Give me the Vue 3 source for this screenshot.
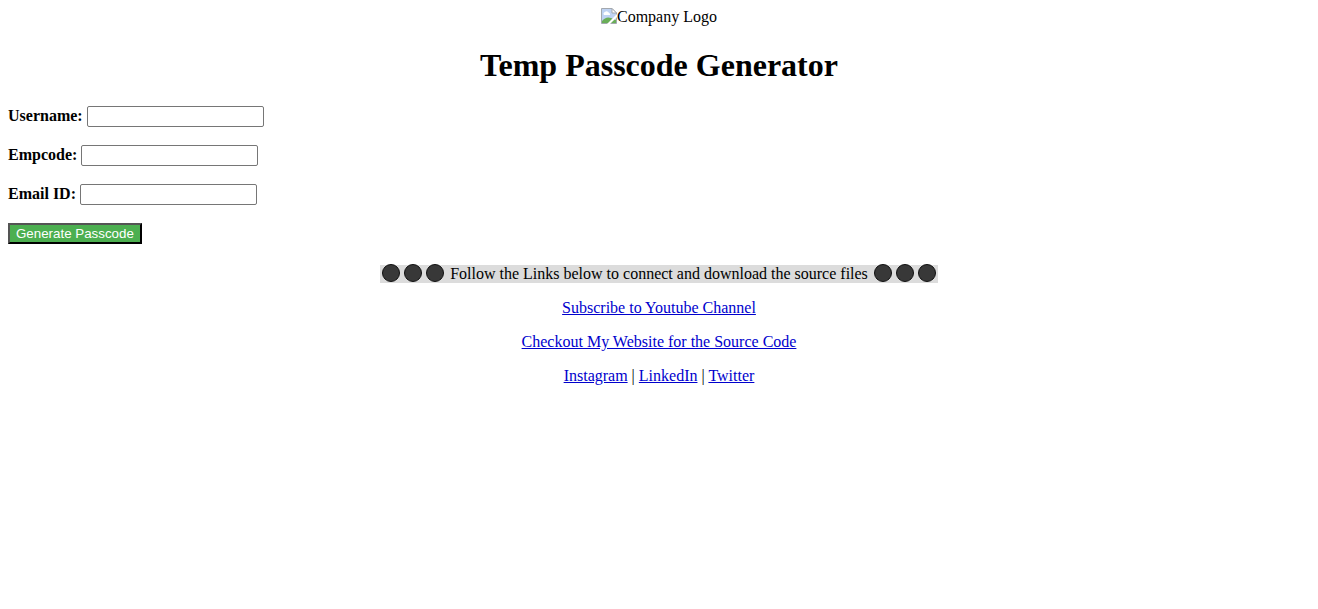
<script setup>
import { reactive } from 'vue'

const fields = [
  { id: 'username', label: 'Username:', type: 'text' },
  { id: 'empcode', label: 'Empcode:', type: 'text' },
  { id: 'email', label: 'Email ID:', type: 'email' },
]
const form = reactive({ username: '', empcode: '', email: '' })
</script>

<template>
  <main class="page">
    <header class="header">
      <div class="logo">
        <svg class="logo-icon" width="16" height="16" viewBox="0 0 16 16" aria-hidden="true">
          <path d="M0.5 0.5H11L15.5 5V15.5H0.5Z" fill="#bfd3f3" stroke="#a3a8ae" />
          <path d="M3 7a2 2 0 0 1 1-3a2.5 2.5 0 0 1 4 1a1.5 1.5 0 0 1 1 2Z" fill="#fff" />
          <path d="M1 15V13Q5 8 10 10L15 12V15Z" fill="#6aae58" />
          <path d="M11 0.5V5H15.5Z" fill="#fff" stroke="#a3a8ae" />
          <path d="M16 6L6 16H9L16 9Z" fill="#fff" />
        </svg>
        <span>Company Logo</span>
      </div>
      <h1 class="title">Temp Passcode Generator</h1>
    </header>

    <form class="form" @submit.prevent>
      <div v-for="f in fields" :key="f.id" class="field">
        <label :for="f.id">{{ f.label }}</label>
        <input :id="f.id" v-model="form[f.id]" :type="f.type" />
      </div>
      <button class="submit" type="submit">Generate Passcode</button>
    </form>

    <footer class="footer">
      <p class="banner">
        <svg v-for="n in 3" :key="n" class="dot" width="22" height="20" viewBox="0 0 22 20" aria-hidden="true">
          <circle cx="11" cy="10" r="8.5" fill="#383838" stroke="#101010" />
        </svg>
        <span class="banner-text">Follow the Links below to connect and download the source files</span>
        <svg v-for="n in 3" :key="n + 3" class="dot" width="22" height="20" viewBox="0 0 22 20" aria-hidden="true">
          <circle cx="11" cy="10" r="8.5" fill="#383838" stroke="#101010" />
        </svg>
      </p>
      <p><a href="#youtube">Subscribe to Youtube Channel</a></p>
      <p><a href="#website">Checkout My Website for the Source Code</a></p>
      <p>
        <a href="#instagram">Instagram</a> | <a href="#linkedin">LinkedIn</a> | <a href="#twitter">Twitter</a>
      </p>
    </footer>
  </main>
</template>

<style scoped>
.page {
  padding: 8px;
  color: #000;
  font: 16px/18px "Liberation Serif", "Times New Roman", serif;
}
.header {
  text-align: center;
}
.logo {
  display: flex;
  justify-content: center;
}
.title {
  margin: 21px 0 22px;
  font-size: 32px;
  line-height: 37px;
  font-weight: bold;
}
.form {
  display: flex;
  flex-direction: column;
  align-items: flex-start;
  gap: 18px;
}
.field {
  display: flex;
  align-items: flex-start;
  gap: 4px;
}
.field label {
  font-weight: bold;
  line-height: 20px;
}
.field input {
  box-sizing: border-box;
  width: 177px;
  height: 21px;
  padding: 1px 2px;
  border: 1px solid #767676;
  border-radius: 2px;
  background: #fff;
  font-family: "Liberation Sans", Arial, sans-serif;
}
.submit {
  box-sizing: border-box;
  height: 21px;
  padding: 0 6px;
  border: 2px outset #000;
  border-radius: 0;
  background: #4caf50;
  color: #fff;
  font-family: "Liberation Sans", Arial, sans-serif;
}
.footer {
  display: flex;
  flex-direction: column;
  align-items: center;
  gap: 16px;
  margin-top: 21px;
  text-align: center;
}
.footer p {
  margin: 0;
}
.banner {
  display: flex;
  background: #dcdcdc;
}
.dot {
  margin: -2px 0 0;
}
.banner-text {
  margin: 0 4px;
}
.footer a {
  color: #0000cd;
  text-decoration: underline;
}
</style>
